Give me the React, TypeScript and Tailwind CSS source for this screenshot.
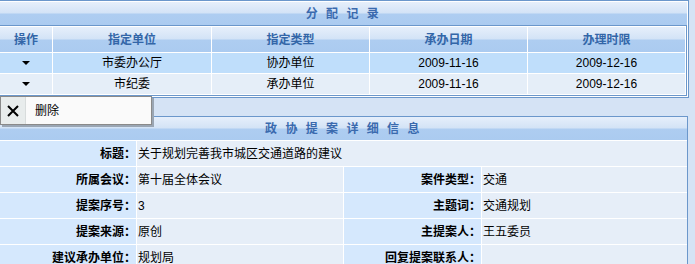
import React from 'react'

const font = { fontFamily: '"Liberation Sans", "Noto Sans CJK SC", sans-serif' }

const bar =
  'bg-[linear-gradient(to_bottom,#e6effb_0%,#d3e3f6_48%,#aecdf1_52%,#abcbf0_100%)]'

const rows = [
  { unit: '市委办公厅', type: '协办单位', start: '2009-11-16', end: '2009-12-16', on: true },
  { unit: '市纪委', type: '承办单位', start: '2009-11-16', end: '2009-12-16', on: false },
]

const details: [string, string, string, string][] = [
  ['所属会议：', '第十届全体会议', '案件类型：', '交通'],
  ['提案序号：', '3', '主题词：', '交通规划'],
  ['提案来源：', '原创', '主提案人：', '王五委员'],
  ['建议承办单位：', '规划局', '回复提案联系人：', ''],
]

function Caret() {
  return (
    <span className="inline-block w-0 h-0 border-l-[4px] border-r-[4px] border-t-[4px] border-l-transparent border-r-transparent border-t-black" />
  )
}

export default function App() {
  return (
    <div className="relative w-[695px] h-[264px] overflow-hidden bg-[#d5e3f5] text-[12px] text-black" style={font}>
      {/* 分配记录 */}
      <div className="w-[689px] border-t border-r border-b border-[#6b97cb] bg-white pt-px pr-px pb-px">
        <div className={`h-[23px] flex items-center justify-center font-bold text-[#3a6aae] tracking-[2.5px] ${bar}`}>
          分 配 记 录
        </div>
        <div className="border-t border-r border-b border-[#6b97cb] pt-px pr-px pb-px">
          <div className="grid grid-cols-[52px_158px_157px_157px_1fr] gap-px bg-white">
            {['操作', '指定单位', '指定类型', '承办日期', '办理时限'].map((h) => (
              <div key={h} className={`h-[25px] flex items-center justify-center font-bold text-[#3366a8] ${bar}`}>
                {h}
              </div>
            ))}
            {rows.map((r, i) => {
              const bg = r.on ? 'bg-[#bfdefb]' : 'bg-[#e5eef8]'
              return (
                <React.Fragment key={i}>
                  <div className={`h-[20px] flex items-center justify-center ${bg}`}>
                    <Caret />
                  </div>
                  <div className={`flex items-center justify-center ${bg}`}>{r.unit}</div>
                  <div className={`flex items-center justify-center ${bg}`}>{r.type}</div>
                  <div className={`flex items-center justify-center ${bg}`}>{r.start}</div>
                  <div className={`flex items-center justify-center ${bg}`}>{r.end}</div>
                </React.Fragment>
              )
            })}
          </div>
        </div>
      </div>

      {/* 政协提案详细信息 */}
      <div className="mt-[18px] w-[688px] border-t border-r border-[#6b97cb] bg-white">
        <div className={`h-[23px] flex items-center justify-center font-bold text-[#3a6aae] tracking-[2.5px] ${bar}`}>
          政 协 提 案 详 细 信 息
        </div>
        <div className="grid grid-cols-[136px_206px_137px_1fr] gap-px bg-white pt-px">
          <div className="h-[25px] flex items-center justify-end bg-[#d5e8fd] font-bold">标题：</div>
          <div className="col-span-3 flex items-center pl-px bg-[#e6eef8]">关于规划完善我市城区交通道路的建议</div>
          {details.map(([a, b, c, d]) => (
            <React.Fragment key={a}>
              <div className="h-[25px] flex items-center justify-end bg-[#d5e8fd] font-bold">{a}</div>
              <div className="flex items-center pl-px bg-[#e6eef8]">{b}</div>
              <div className="flex items-center justify-end bg-[#d5e8fd] font-bold">{c}</div>
              <div className="flex items-center pl-px bg-[#e6eef8]">{d}</div>
            </React.Fragment>
          ))}
        </div>
      </div>

      {/* context menu */}
      <div className="absolute left-0 top-[96px] w-[152px] h-[29px] flex border border-[#8a8a8a] bg-[#fafafa] shadow-[2px_2px_0_#9aa6b4]">
        <div className="w-[25px] flex items-center justify-center bg-[#e8ecec] border-r border-[#d8dcdc]">
          <svg width="14" height="14" viewBox="0 0 14 14">
            <path d="M2 2 L12 12 M12 2 L2 12" stroke="#000" strokeWidth="2" />
          </svg>
        </div>
        <div className="flex items-center pl-[9px]">删除</div>
      </div>
    </div>
  )
}
